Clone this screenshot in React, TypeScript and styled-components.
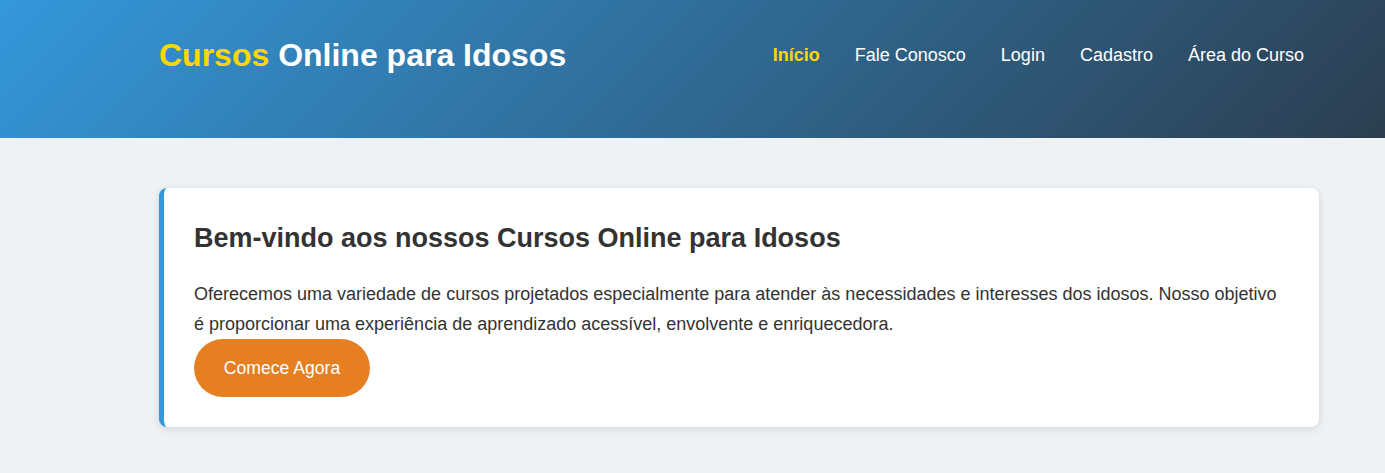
import React from "react";
import styled, { createGlobalStyle } from "styled-components";

const Global = createGlobalStyle`
  html, body { margin: 0; padding: 0; }
  body {
    background: #eef2f5;
    font-family: "Liberation Sans", Arial, sans-serif;
    color: #333;
  }
`;

const Header = styled.header`
  height: 138px;
  background: linear-gradient(135deg, #3498db 0%, #2c3e50 100%);
  padding: 0 81px 28px 159px;
  display: flex;
  align-items: center;
  justify-content: space-between;
  box-sizing: border-box;
`;

const Logo = styled.h1`
  margin: 0;
  font-size: 32px;
  font-weight: 700;
  color: #fff;
`;

const Accent = styled.span`
  color: #ffd700;
`;

const Nav = styled.nav`
  display: flex;
  gap: 35px;
`;

const NavLink = styled.a<{ $active?: boolean }>`
  font-size: 18px;
  color: ${(p) => (p.$active ? "#ffd700" : "#fff")};
  font-weight: ${(p) => (p.$active ? 700 : 400)};
  text-decoration: none;
`;

const Main = styled.main`
  padding: 50px 66px 40px 159px;
`;

const Card = styled.section`
  background: #fff;
  border-left: 5px solid #3498db;
  border-radius: 8px;
  box-shadow: 0 2px 8px rgba(0, 0, 0, 0.12);
  padding: 35px 30px 30px 30px;
`;

const Title = styled.h2`
  margin: 0 0 25px;
  font-size: 27px;
  font-weight: 700;
  color: #333;
`;

const Text = styled.p`
  margin: 0;
  font-size: 18px;
  line-height: 30px;
  color: #333;
`;

const Button = styled.button`
  display: block;
  width: 176px;
  height: 58px;
  border: none;
  border-radius: 29px;
  background: #e67e22;
  color: #fff;
  font-family: inherit;
  font-size: 17.6px;
  cursor: pointer;
`;

export default function App() {
  return (
    <>
      <Global />
      <Header>
        <Logo>
          <Accent>Cursos</Accent> Online para Idosos
        </Logo>
        <Nav>
          <NavLink href="#" $active>Início</NavLink>
          <NavLink href="#">Fale Conosco</NavLink>
          <NavLink href="#">Login</NavLink>
          <NavLink href="#">Cadastro</NavLink>
          <NavLink href="#">Área do Curso</NavLink>
        </Nav>
      </Header>
      <Main>
        <Card>
          <Title>Bem-vindo aos nossos Cursos Online para Idosos</Title>
          <Text>
            Oferecemos uma variedade de cursos projetados especialmente para atender às necessidades e interesses dos idosos. Nosso objetivo é proporcionar uma experiência de aprendizado acessível, envolvente e enriquecedora.
          </Text>
          <Button>Comece Agora</Button>
        </Card>
      </Main>
    </>
  );
}
